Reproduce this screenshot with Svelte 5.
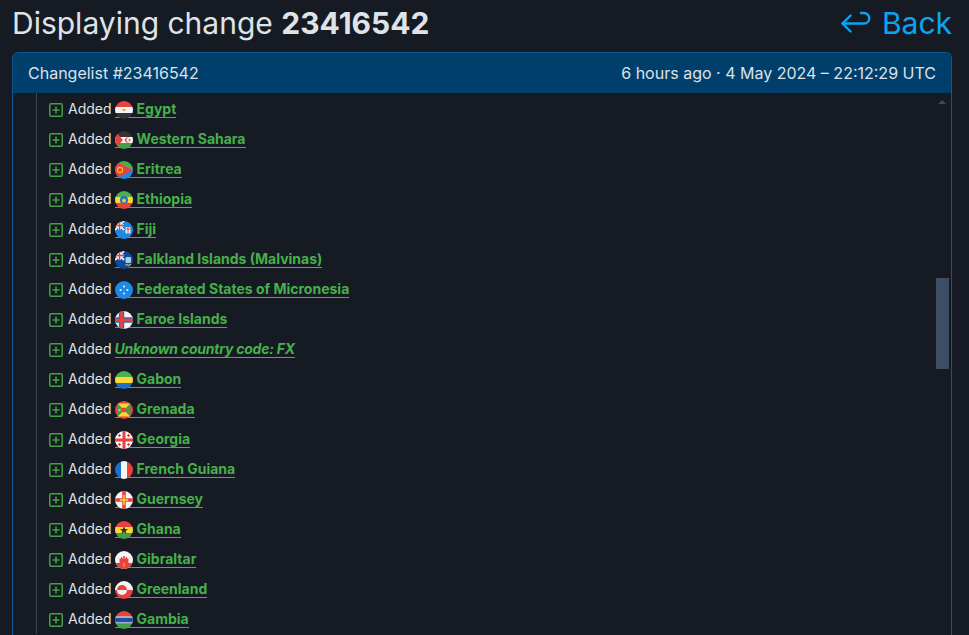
<script>
  const flags = {
    eg: '<rect width="18" height="6" fill="#e8423f"/><rect y="6" width="18" height="6" fill="#f5f5f5"/><rect y="12" width="18" height="6" fill="#333"/><path d="M6.500 8h5L9 10.400z" fill="#f5a623"/>',
    eh: '<rect width="18" height="6" fill="#333"/><rect y="6" width="18" height="6" fill="#f5f5f5"/><rect y="12" width="18" height="6" fill="#43a047"/><path d="M0 0l8 9-8 9z" fill="#e8423f"/><circle cx="12.500" cy="9" r="2.600" fill="#e8423f"/><circle cx="13.400" cy="9" r="2.100" fill="#f5f5f5"/><circle cx="14.600" cy="9" r="1" fill="#e8423f"/>',
    er: '<rect width="18" height="9" fill="#4caf50"/><rect y="9" width="18" height="9" fill="#1e88e5"/><path d="M0 0l18 9-18 9z" fill="#e8423f"/><circle cx="5" cy="9" r="2.600" fill="none" stroke="#ffc107" stroke-width="1.200"/>',
    et: '<rect width="18" height="6" fill="#4caf50"/><rect y="6" width="18" height="6" fill="#fdd835"/><rect y="12" width="18" height="6" fill="#e8423f"/><circle cx="9" cy="9" r="4" fill="#1e6fc8"/><path d="M9 6.400l.8 2.200 2 .1-1.600 1.400.6 2L9 10.900l-1.800 1.200.6-2-1.600-1.400 2-.1z" fill="#fdd835"/>',
    fj: '<rect width="18" height="18" fill="#1e88e5"/><rect width="9" height="9" fill="#283593"/><path d="M0 0l9 9M9 0L0 9" stroke="#f5f5f5" stroke-width="1.800"/><path d="M4.500 0v9M0 4.500h9" stroke="#f5f5f5" stroke-width="2.600"/><path d="M4.500 0v9M0 4.500h9" stroke="#e8423f" stroke-width="1.300"/><rect x="10.500" y="6" width="5" height="6.500" rx="1" fill="#f5f5f5"/><path d="M13 6v6.500M10.500 8h5" stroke="#e8423f"/>',
    fk: '<rect width="18" height="18" fill="#0f4a9c"/><rect width="9" height="9" fill="#283593"/><path d="M0 0l9 9M9 0L0 9" stroke="#f5f5f5" stroke-width="1.800"/><path d="M4.500 0v9M0 4.500h9" stroke="#f5f5f5" stroke-width="2.600"/><path d="M4.500 0v9M0 4.500h9" stroke="#e8423f" stroke-width="1.300"/><rect x="10.500" y="6" width="5.500" height="6" rx="1" fill="#9fd0e8"/><path d="M10.500 13.500q2.700 1.600 5.500 0" stroke="#fdd835" fill="none"/>',
    fm: '<rect width="18" height="18" fill="#1e88e5"/><g fill="#f5f5f5"><circle cx="9" cy="5.600" r="1"/><circle cx="9" cy="12.400" r="1"/><circle cx="5.600" cy="9" r="1"/><circle cx="12.400" cy="9" r="1"/></g>',
    fo: '<rect width="18" height="18" fill="#f5f5f5"/><path d="M6.500 0v18M0 9h18" stroke="#1e6fc8" stroke-width="5.400"/><path d="M6.500 0v18M0 9h18" stroke="#e8423f" stroke-width="2.800"/>',
    ga: '<rect width="18" height="6" fill="#4caf50"/><rect y="6" width="18" height="6" fill="#fdd835"/><rect y="12" width="18" height="6" fill="#1e6fc8"/>',
    gd: '<rect width="18" height="18" fill="#e8423f"/><path d="M2.500 2.500L9 9l6.500-6.500zM2.500 15.500L9 9l6.500 6.500z" fill="#fdd835"/><path d="M2.500 2.500L9 9 2.500 15.500zM15.500 2.500L9 9l6.500 6.500z" fill="#43a047"/><circle cx="9" cy="9" r="2.400" fill="#e8423f"/><circle cx="4.500" cy="9" r="1.100" fill="#fdd835"/>',
    ge: '<rect width="18" height="18" fill="#f5f5f5"/><path d="M9 0v18M0 9h18" stroke="#e8423f" stroke-width="3"/><path d="M4.500 3v3M3 4.500h3M13.500 3v3M12 4.500h3M4.500 12v3M3 13.500h3M13.500 12v3M12 13.500h3" stroke="#e8423f" stroke-width="1.200"/>',
    gf: '<rect width="6" height="18" fill="#1e6fc8"/><rect x="6" width="6" height="18" fill="#f5f5f5"/><rect x="12" width="6" height="18" fill="#e8423f"/>',
    gg: '<rect width="18" height="18" fill="#f5f5f5"/><path d="M9 0v18M0 9h18" stroke="#e8423f" stroke-width="3.600"/><path d="M9 4v10M5 9h8" stroke="#fdd835" stroke-width="1.500"/>',
    gh: '<rect width="18" height="6" fill="#e8423f"/><rect y="6" width="18" height="6" fill="#fdd835"/><rect y="12" width="18" height="6" fill="#43a047"/><path d="M9 5l1.100 2.900 3 .1-2.400 1.900.9 3L9 11.200l-2.600 1.700.9-3L4.900 8l3-.1z" fill="#333"/>',
    gi: '<rect width="18" height="18" fill="#f5f5f5"/><rect y="12" width="18" height="6" fill="#e8423f"/><path d="M4.500 12V7.500h1.500V6h1.200v1.500h1V5h1.600v2.500h1V6h1.200v1.500H13.500V12z" fill="#e8423f"/><rect x="8.500" y="12" width="1" height="3.500" fill="#fdd835"/>',
    gl: '<rect width="18" height="9" fill="#f5f5f5"/><rect y="9" width="18" height="9" fill="#e8423f"/><circle cx="7" cy="9" r="5" fill="#e8423f"/><path d="M2 9a5 5 0 0 0 10 0z" fill="#f5f5f5"/>',
    gm: '<rect width="18" height="5.400" fill="#e8423f"/><rect y="5.400" width="18" height="7.200" fill="#f5f5f5"/><rect y="6.600" width="18" height="4.800" fill="#1e4fa0"/><rect y="12.600" width="18" height="5.400" fill="#43a047"/>'
  };
  const rows = [
    ['eg', 'Egypt'], ['eh', 'Western Sahara'], ['er', 'Eritrea'], ['et', 'Ethiopia'], ['fj', 'Fiji'],
    ['fk', 'Falkland Islands (Malvinas)'], ['fm', 'Federated States of Micronesia'], ['fo', 'Faroe Islands'],
    [null, 'Unknown country code: FX'], ['ga', 'Gabon'], ['gd', 'Grenada'], ['ge', 'Georgia'],
    ['gf', 'French Guiana'], ['gg', 'Guernsey'], ['gh', 'Ghana'], ['gi', 'Gibraltar'], ['gl', 'Greenland'], ['gm', 'Gambia']
  ];
</script>

<main class="page">
  <header class="top">
    <h1>Displaying change <b>23416542</b></h1>
    <a class="back" href="#back">
      <svg class="back-icon" viewBox="0 0 30 24" width="30" height="24" fill="none" stroke="currentColor" stroke-width="2.400" stroke-linecap="round" stroke-linejoin="round">
        <path d="M9.500 4.500L1.500 12.500 9.500 20.500"/>
        <path d="M1.500 12.500h21.500a5.200 5.200 0 0 0 0-10.500h-3"/>
      </svg>
      Back
    </a>
  </header>
  <section class="card">
    <div class="card-head">
      <span>Changelist #23416542</span>
      <span>6 hours ago · 4 May 2024 – 22:12:29 UTC</span>
    </div>
    <div class="card-body">
      <ul class="list">
        {#each rows as [code, name]}
          <li class="row">
            <svg class="plus" viewBox="0 0 14 14" width="14" height="14" fill="none" stroke="currentColor">
              <rect x="0.750" y="0.750" width="12.500" height="12.500" rx="1.500" stroke-width="1.500"/>
              <path d="M7 3.500v7M3.500 7h7" stroke-width="1.600"/>
            </svg>
            <span class="verb">Added</span>
            <a class="link" class:unknown={!code} href="#c">
              {#if code}
                <svg class="flag" viewBox="0 0 18 18" width="18" height="18">{@html flags[code]}</svg>
              {/if}
              <span>{name}</span>
            </a>
          </li>
        {/each}
      </ul>
      <div class="arrow"></div>
      <div class="thumb"></div>
    </div>
  </section>
</main>

<style>
  :global(body) {
    margin: 0;
    background: #161a22;
    overflow: hidden;
  }
  .page {
    height: 635px;
    box-sizing: border-box;
    padding: 0 17px 0 12px;
    font-family: Inter, "Liberation Sans", sans-serif;
    color: #dfe3e8;
    overflow: hidden;
  }
  .top {
    display: flex;
    justify-content: space-between;
    align-items: center;
    height: 46px;
    margin-bottom: 6px;
  }
  h1 {
    margin: 0;
    font-size: 30px;
    font-weight: 400;
    line-height: 46px;
  }
  h1 b {
    font-weight: 700;
  }
  .back {
    display: flex;
    align-items: center;
    gap: 11px;
    color: #0aa5f2;
    font-size: 30px;
    text-decoration: none;
  }
  .back-icon {
    display: block;
  }
  .card {
    border: 1px solid #0b5a8f;
    border-bottom: 0;
    border-radius: 6px 6px 0 0;
    height: 583px;
    box-sizing: border-box;
    display: flex;
    flex-direction: column;
  }
  .card-head {
    flex: none;
    height: 40px;
    background: #003f6b;
    border-radius: 5px 5px 0 0;
    display: flex;
    justify-content: space-between;
    align-items: center;
    padding: 0 15px;
    font-size: 16px;
    color: #dbe2e9;
  }
  .card-body {
    position: relative;
    flex: 1;
    min-height: 0;
    overflow: hidden;
  }
  .list {
    list-style: none;
    margin: 0 0 0 23px;
    padding: 1px 0 0 12px;
    border-left: 1px solid #3a4658;
  }
  .row {
    display: flex;
    align-items: center;
    height: 30px;
    font-size: 14px;
  }
  .plus {
    flex: none;
    color: #43a047;
    margin: 2px 5px 0 0;
  }
  .verb {
    margin: 0 3px 2px 0;
  }
  .link {
    display: inline-flex;
    align-items: center;
    gap: 4px;
    height: 17px;
    color: #46b04a;
    font-weight: 700;
    text-decoration: none;
    border-bottom: 1px solid #46b04a;
  }
  .link.unknown {
    font-style: italic;
    letter-spacing: -0.22px;
  }
  .flag {
    flex: none;
    border-radius: 50%;
    margin-bottom: -3px;
  }
  .arrow {
    position: absolute;
    top: 7px;
    right: 5px;
    width: 0;
    height: 0;
    border-left: 4px solid transparent;
    border-right: 4px solid transparent;
    border-bottom: 4px solid #3d4a5e;
  }
  .thumb {
    position: absolute;
    top: 185px;
    right: 2px;
    width: 13px;
    height: 91px;
    background: #3d4d66;
  }
</style>
